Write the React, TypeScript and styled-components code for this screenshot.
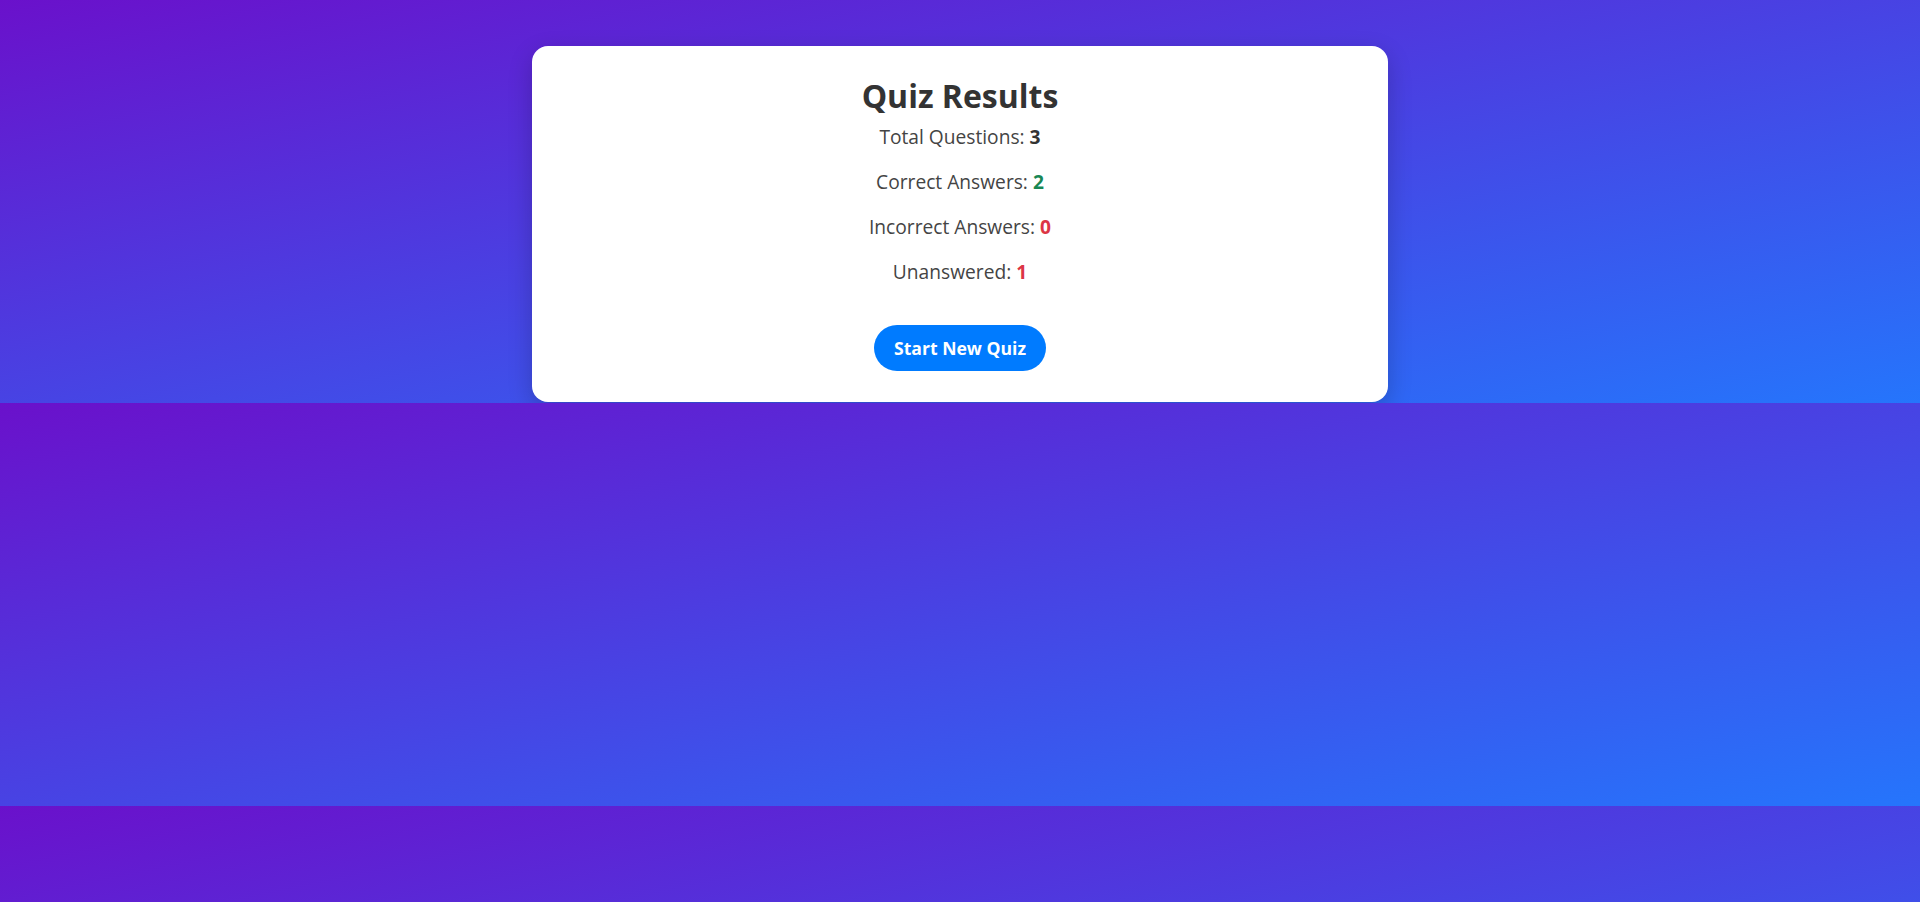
import React from "react";
import styled, { createGlobalStyle } from "styled-components";

const GlobalStyle = createGlobalStyle`
  html, body {
    margin: 0;
    padding: 0;
  }
  body {
    font-family: "Open Sans", "Noto Sans", sans-serif;
    background: linear-gradient(to bottom right, #6a11cb 0%, #2575fc 100%);
    color: #333;
  }
`;

const Page = styled.div`
  display: flex;
  justify-content: center;
  padding: 46px 0 1px;
`;

const Card = styled.div`
  box-sizing: border-box;
  width: 856px;
  height: 356px;
  background: #fff;
  border-radius: 16px;
  box-shadow: 0 8px 24px rgba(0, 0, 0, 0.2);
  padding: 28px 30px 30px;
  text-align: center;
`;

const Title = styled.h2`
  margin: 0 0 6px;
  font-size: 32px;
  font-weight: 700;
  color: #333;
`;

const Stat = styled.p`
  margin: 0 0 18px;
  font-size: 19.2px;
  color: #444;
`;

const Value = styled.strong<{ $color: string }>`
  font-weight: 700;
  color: ${(p) => p.$color};
`;

const Button = styled.button`
  margin-top: 22px;
  height: 46px;
  padding: 0 20px;
  border: none;
  border-radius: 23px;
  background: #007bff;
  color: #fff;
  font-family: "Open Sans", "Noto Sans", sans-serif;
  font-size: 17.6px;
  font-weight: 700;
  cursor: pointer;
`;

export default function App() {
  return (
    <>
      <GlobalStyle />
      <Page>
        <Card>
          <Title>Quiz Results</Title>
          <Stat>
            Total Questions: <Value $color="#333">3</Value>
          </Stat>
          <Stat>
            Correct Answers: <Value $color="#198754">2</Value>
          </Stat>
          <Stat>
            Incorrect Answers: <Value $color="#dc3545">0</Value>
          </Stat>
          <Stat>
            Unanswered: <Value $color="#dc3545">1</Value>
          </Stat>
          <Button>Start New Quiz</Button>
        </Card>
      </Page>
    </>
  );
}
